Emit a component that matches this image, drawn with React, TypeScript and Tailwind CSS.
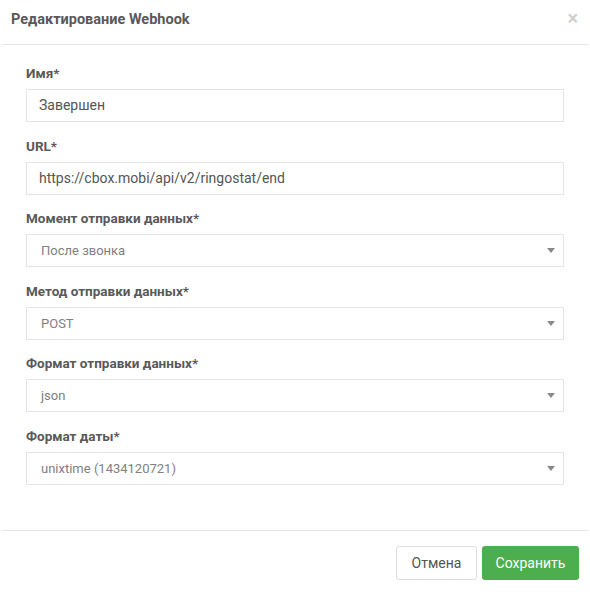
import React from 'react';

const fields: { label: string; value: string; select?: boolean }[] = [
  { label: 'Имя*', value: 'Завершен' },
  { label: 'URL*', value: 'https://cbox.mobi/api/v2/ringostat/end' },
  { label: 'Момент отправки данных*', value: 'После звонка', select: true },
  { label: 'Метод отправки данных*', value: 'POST', select: true },
  { label: 'Формат отправки данных*', value: 'json', select: true },
  { label: 'Формат даты*', value: 'unixtime (1434120721)', select: true },
];

const Field: React.FC<{ label: string; value: string; select?: boolean }> = ({
  label,
  value,
  select,
}) => (
  <div className="mb-[15.6px]">
    <div className="h-[18px] leading-[17px] text-[13.5px] font-bold text-[#595959] mb-[6px]">
      {label}
    </div>
    {select ? (
      <div className="h-[33px] border border-[#e5e5e5] flex items-center justify-between pl-[14px] pr-[8px]">
        <span className="text-[13px] text-[#808080]">{value}</span>
        <span className="w-0 h-0 border-l-[4px] border-r-[4px] border-t-[5px] border-l-transparent border-r-transparent border-t-[#888]" />
      </div>
    ) : (
      <div className="h-[33px] border border-[#e5e5e5] flex items-center pl-[12px]">
        <span className="text-[14px] text-[#555]">{value}</span>
      </div>
    )}
  </div>
);

export default function App() {
  return (
    <div
      className="w-[590px] h-[596px] bg-white flex flex-col"
      style={{ fontFamily: 'Roboto, "Liberation Sans", sans-serif' }}
    >
      {/* Header */}
      <div className="h-[45px] mx-[2px] border-b border-[#e5e5e5] flex items-center justify-between pl-[9px] pr-[10px]">
        <h2 className="text-[14.5px] font-bold text-[#595959] -mt-[5px]">
          Редактирование Webhook
        </h2>
        <span className="text-[20px] font-bold text-[#cfcfcf] leading-none -mt-[8px]">
          ×
        </span>
      </div>

      {/* Body */}
      <div className="px-[26px] pt-[20px] h-[485px]">
        {fields.map((f) => (
          <Field key={f.label} {...f} />
        ))}
      </div>

      {/* Footer */}
      <div className="mx-[2px] border-t border-[#e5e5e5] flex justify-end gap-[5px] pt-[15px] pr-[9px]">
        <button className="h-[34px] w-[81px] border border-[#ddd] rounded-[3px] text-[14px] text-[#555] bg-white">
          Отмена
        </button>
        <button className="h-[34px] w-[97px] rounded-[3px] text-[14px] text-white bg-[#4cae4c]">
          Сохранить
        </button>
      </div>
    </div>
  );
}
